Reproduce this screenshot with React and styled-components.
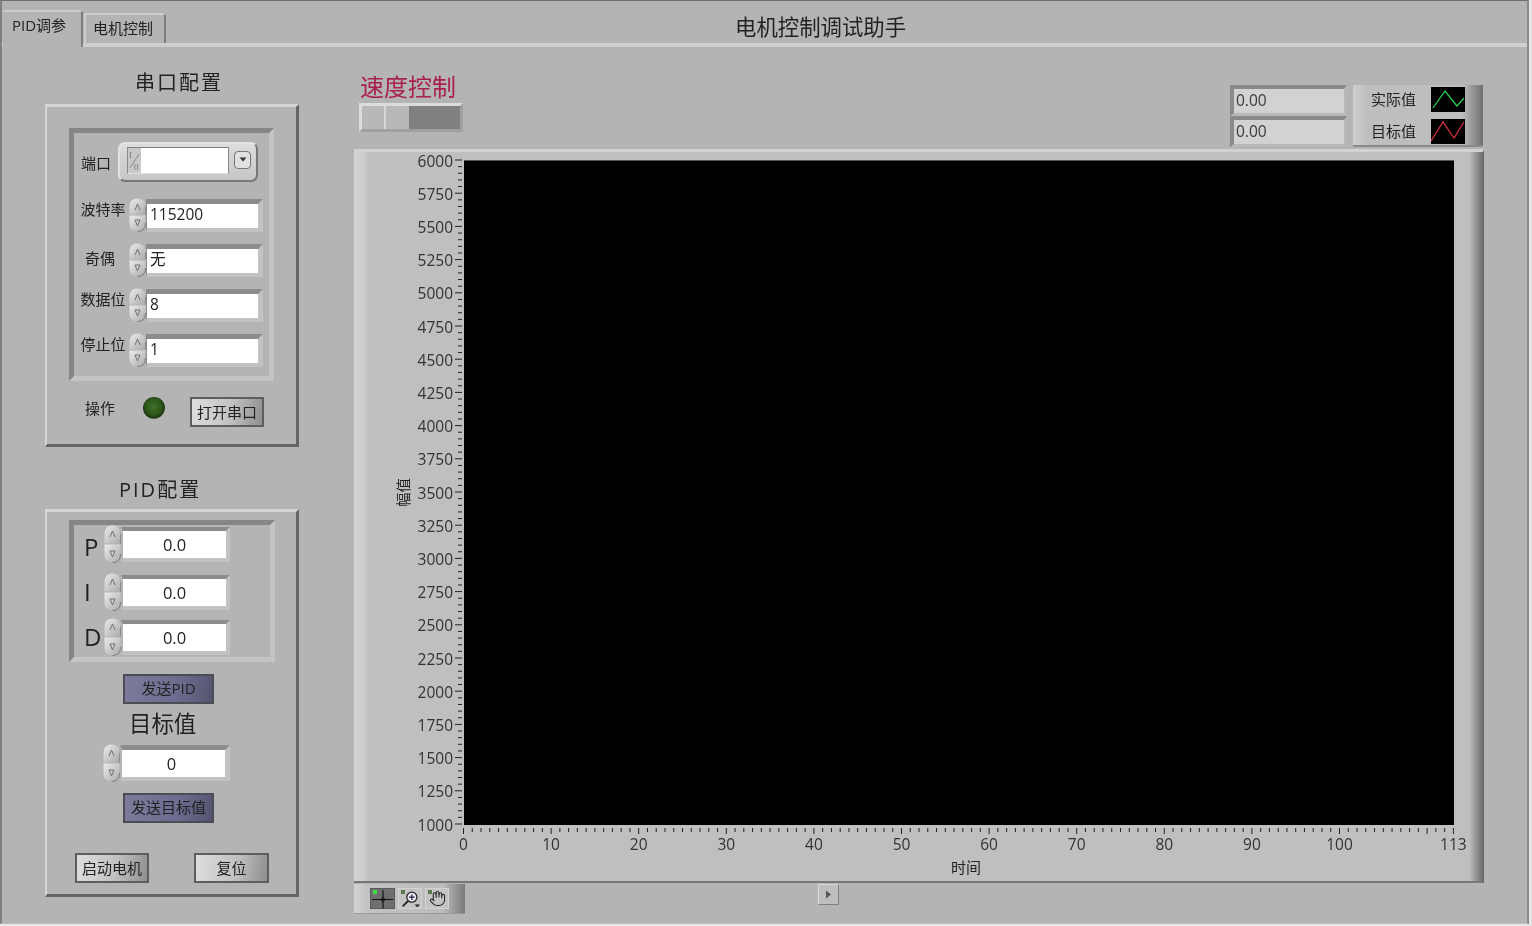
import styled, { createGlobalStyle } from "styled-components";
import { Hand } from "lucide-react";

const Y_LABELS = [6000, 5750, 5500, 5250, 5000, 4750, 4500, 4250, 4000, 3750, 3500, 3250, 3000, 2750, 2500, 2250, 2000, 1750, 1500, 1250, 1000];
const Y_STEP = 33.2;
const X_UNIT = 8.76;

function Spinner({ height = 34 }) {
  const mid = height / 2;
  return (
    <SpinnerSvg width="17" height={height} viewBox={`0 0 17 ${height}`}>
      <defs>
        <linearGradient id="spinFill" x1="0" y1="0" x2="1" y2="1">
          <stop offset="0" stopColor="#ececec" />
          <stop offset="1" stopColor="#aaaaaa" />
        </linearGradient>
      </defs>
      <path d={`M0.5 ${mid - 0.5} V9 Q0.5 0.5 8.5 0.5 Q16.5 0.5 16.5 9 V${mid - 0.5} Z`} fill="url(#spinFill)" />
      <path d={`M0.5 ${mid + 0.5} H16.5 V${height - 9} Q16.5 ${height - 0.5} 8.5 ${height - 0.5} Q0.5 ${height - 0.5} 0.5 ${height - 9} Z`} fill="url(#spinFill)" />
      <path d={`M16.5 ${height - 9} Q16.5 ${height - 0.5} 8.5 ${height - 0.5}`} fill="none" stroke="#7c7c7c" strokeWidth="1" />
      <path d={`M16.5 9 V${mid - 0.5}`} fill="none" stroke="#8c8c8c" strokeWidth="1" />
      <path d="M6 12 L8.5 6 L11 12" fill="none" stroke="#707070" strokeWidth="1" />
      <path d={`M6 ${height - 12} H11 L8.5 ${height - 6} Z`} fill="none" stroke="#707070" strokeWidth="1" />
    </SpinnerSvg>
  );
}

function SerialRow({ label, value, lift, nudge = 0 }) {
  return (
    <Row>
      <SerialLabel $lift={lift} $nudge={nudge}>{label}</SerialLabel>
      <Spinner />
      <SerialField>{value}</SerialField>
    </Row>
  );
}

function PidRow({ letter, drop, gap, value }) {
  return (
    <PidLine $gap={gap}>
      <PidLetter $drop={drop}>{letter}</PidLetter>
      <Spinner height={38} />
      <PidField>{value}</PidField>
    </PidLine>
  );
}

function YAxis() {
  const minors = [];
  for (let i = 0; i < 20; i++) {
    for (let m = 1; m < 5; m++) {
      minors.push(12 + i * Y_STEP + (m * Y_STEP) / 5);
    }
  }
  return (
    <AxisSvg width="54" height="690" viewBox="0 0 54 690">
      {Y_LABELS.map((v, i) => (
        <g key={v}>
          <AxisText x="43" y={12 + i * Y_STEP + 6.6} textAnchor="end">
            {v}
          </AxisText>
          <line x1="45" x2="52" y1={12 + i * Y_STEP} y2={12 + i * Y_STEP} stroke="#222" />
        </g>
      ))}
      {minors.map((y) => (
        <line key={y} x1="48" x2="52" y1={y} y2={y} stroke="#222" />
      ))}
    </AxisSvg>
  );
}

function XAxis() {
  const units = [];
  for (let u = 0; u <= 113; u++) units.push(u);
  const labels = [0, 10, 20, 30, 40, 50, 60, 70, 80, 90, 100, 113];
  return (
    <AxisSvg width="1010" height="30" viewBox="0 0 1010 30">
      {units.map((u) => {
        const major = u % 10 === 0 || u === 113;
        return (
          <line
            key={u}
            x1={0.5 + u * X_UNIT}
            x2={0.5 + u * X_UNIT}
            y1="3"
            y2={major ? 9 : 7}
            stroke="#222"
          />
        );
      })}
      {labels.map((v) => (
        <AxisText key={v} x={0.5 + v * X_UNIT} y="24.5" textAnchor="middle">
          {v}
        </AxisText>
      ))}
    </AxisSvg>
  );
}

export default function App() {
  return (
    <>
      <GlobalStyle />
      <Frame>
        <TabBar>
          <ActiveTab>PID调参</ActiveTab>
          <Tab>电机控制</Tab>
          <Title>电机控制调试助手</Title>
        </TabBar>
        <Main>
          <LeftColumn>
            <Heading $top={21} $height={57} $left={90}>
              串口配置
            </Heading>
            <Panel $height={343}>
              <SerialRecess>
                <PortRow>
                  <PortLabel>端口</PortLabel>
                  <PortBox>
                    <PortInput>
                      <IoTag>
                        <svg width="13" height="25" viewBox="0 0 13 25">
                          <IoText x="1" y="10">I</IoText>
                          <path d="M2 20 L11 6" stroke="#777" strokeWidth="0.8" />
                          <IoText x="6" y="22">0</IoText>
                        </svg>
                      </IoTag>
                    </PortInput>
                    <PortButton>
                      <svg width="8" height="5" viewBox="0 0 8 5">
                        <path d="M0.5 0.5 H7.5 L4 4.5 Z" fill="#333" />
                      </svg>
                    </PortButton>
                  </PortBox>
                </PortRow>
                <SerialRows>
                  <SerialRow label="波特率" value="115200" lift={7} />
                  <SerialRow label="奇偶" value="无" lift={3} nudge={6} />
                  <SerialRow label="数据位" value="8" lift={7} />
                  <SerialRow label="停止位" value="1" lift={7} />
                </SerialRows>
              </SerialRecess>
              <OperationRow>
                <OperationLabel>操作</OperationLabel>
                <Led />
                <Button $width={74}>打开串口</Button>
              </OperationRow>
            </Panel>
            <Heading $top={28} $height={62} $left={74}>
              PID配置
            </Heading>
            <Panel $height={388}>
              <PidRecess>
                <PidRow letter="P" drop={6} gap={0} value="0.0" />
                <PidRow letter="I" drop={0} gap={10} value="0.0" />
                <PidRow letter="D" drop={0} gap={7} value="0.0" />
              </PidRecess>
              <PurpleButton $top={12}>发送PID</PurpleButton>
              <TargetTitle>目标值</TargetTitle>
              <TargetRow>
                <Spinner height={38} />
                <TargetField>0</TargetField>
              </TargetRow>
              <PurpleButton $top={11}>发送目标值</PurpleButton>
              <BottomButtons>
                <Button $width={74}>启动电机</Button>
                <Button $width={75}>复位</Button>
              </BottomButtons>
            </Panel>
          </LeftColumn>
          <RightColumn>
            <TopRow>
              <ModeBlock>
                <ModeTitle>速度控制</ModeTitle>
                <Slide>
                  <SlideCell $width={22} />
                  <SlideCell $width={23} />
                  <SlideThumb />
                </Slide>
              </ModeBlock>
              <ReadoutGroup>
                <Readouts>
                  <Readout>0.00</Readout>
                  <Readout>0.00</Readout>
                </Readouts>
                <Legend>
                  <LegendRow>
                    <LegendLabel>实际值</LegendLabel>
                    <Swatch width="34" height="25" viewBox="0 0 34 25">
                      <path d="M2 21 L14 4 L26 19 L33 11" fill="none" stroke="#2ad052" strokeWidth="1.3" />
                    </Swatch>
                  </LegendRow>
                  <LegendRow>
                    <LegendLabel>目标值</LegendLabel>
                    <Swatch width="34" height="25" viewBox="0 0 34 25">
                      <path d="M0 22 L12 3 L23 19 L33 3" fill="none" stroke="#d03040" strokeWidth="1.3" />
                    </Swatch>
                  </LegendRow>
                </Legend>
              </ReadoutGroup>
            </TopRow>
            <Chart>
              <PlotRow>
                <YTitle>幅值</YTitle>
                <YAxis />
                <Plot />
              </PlotRow>
              <XArea>
                <XAxis />
                <XTitle>时间</XTitle>
              </XArea>
            </Chart>
            <BottomRow>
              <Toolbar>
                <ToolButton $pressed>
                  <ToolDot $on />
                  <svg width="24" height="20" viewBox="0 0 24 20">
                    <path d="M1 10.5 H23 M12.5 1 V20" stroke="#111" strokeWidth="1.2" />
                    <circle cx="12.5" cy="10.5" r="1.8" fill="none" stroke="#111" />
                  </svg>
                </ToolButton>
                <ToolButton>
                  <ToolDot />
                  <svg width="23" height="20" viewBox="0 0 24 20">
                    <circle cx="14" cy="8" r="5.5" fill="#e8e8f0" stroke="#222" strokeWidth="1.4" />
                    <path d="M11 8 H17 M14 5 V11" stroke="#224" strokeWidth="1.4" />
                    <path d="M10 12 L4 18" stroke="#222" strokeWidth="2" />
                    <path d="M17 16 H23 L20 19 Z" fill="#222" />
                  </svg>
                </ToolButton>
                <ToolButton>
                  <ToolDot />
                  <Hand size={17} strokeWidth={1.5} color="#222" />
                </ToolButton>
              </Toolbar>
              <ScrollButton>
                <svg width="7" height="9" viewBox="0 0 7 9">
                  <path d="M1 0.5 L6 4.5 L1 8.5 Z" fill="#555" />
                </svg>
              </ScrollButton>
            </BottomRow>
          </RightColumn>
        </Main>
      </Frame>
    </>
  );
}

const GlobalStyle = createGlobalStyle`
  html, body {
    margin: 0;
    padding: 0;
    background: #e6e6e6;
  }
  body {
    font-family: "Open Sans", "Noto Sans CJK SC", sans-serif;
    color: #222;
    overflow: hidden;
  }
  * {
    box-sizing: border-box;
  }
`;

const Frame = styled.div`
  width: 1529px;
  height: 924px;
  background: #b4b4b4;
  border-top: 1px solid #6e6e6e;
  border-left: 2px solid #808080;
  border-right: 2px solid #8a8a8a;
  border-bottom: 1px solid #bcbcbc;
  filter: blur(0.4px);
`;

const TabBar = styled.div`
  display: flex;
  align-items: flex-end;
  height: 46px;
  border-bottom: 4px solid #cfcfcf;
`;

const ActiveTab = styled.div`
  width: 80px;
  height: 37px;
  margin-left: 1px;
  margin-bottom: -4px;
  padding: 3px 0 0 9px;
  font-size: 15px;
  line-height: 20px;
  background: #b4b4b4;
  border-top: 2px solid #cdcdcd;
  border-right: 2px solid #7e7e7e;
  border-top-right-radius: 4px;
`;

const Tab = styled.div`
  width: 82px;
  height: 30px;
  margin-left: 1px;
  padding-left: 7px;
  font-size: 15px;
  line-height: 27px;
  background: #b4b4b4;
  border-top: 2px solid #cdcdcd;
  border-left: 2px solid #cdcdcd;
  border-right: 2px solid #7e7e7e;
  border-top-right-radius: 4px;
`;

const Title = styled.div`
  align-self: flex-start;
  margin-top: 11px;
  margin-left: 569px;
  font-size: 21.4px;
  line-height: 30px;
`;

const Main = styled.div`
  display: flex;
  padding-left: 43px;
  gap: 55px;
`;

const LeftColumn = styled.div`
  display: flex;
  flex-direction: column;
  width: 254px;
`;

const Heading = styled.div`
  height: ${(p) => p.$height}px;
  padding-top: ${(p) => p.$top}px;
  padding-left: ${(p) => p.$left}px;
  font-size: 20px;
  letter-spacing: 2px;
  line-height: 30px;
`;

const Panel = styled.div`
  height: ${(p) => p.$height}px;
  border-style: solid;
  border-width: 3px 3px 3px 2px;
  border-color: #d6d6d6 #666 #666 #d6d6d6;
`;

const SerialRecess = styled.div`
  width: 205px;
  height: 253px;
  margin: 21px 0 0 22px;
  padding-top: 9px;
  border: 5px solid;
  border-color: #868686 #c4c4c4 #c4c4c4 #868686;
`;

const PortRow = styled.div`
  display: flex;
  align-items: center;
  height: 40px;
`;

const PortLabel = styled.div`
  width: 30px;
  margin: 0 7px;
  font-size: 15px;
`;

const PortBox = styled.div`
  display: flex;
  align-items: center;
  width: 140px;
  height: 40px;
  padding-left: 7px;
  background: linear-gradient(#dcdcdc, #c6c6c6);
  border: 2px solid;
  border-color: #e2e2e2 #777 #777 #e2e2e2;
  border-radius: 7px;
`;

const PortInput = styled.div`
  width: 102px;
  height: 27px;
  margin-bottom: 3px;
  background: #fff;
  border: 1px solid;
  border-color: #7e7e7e #8a8a8a #e0e0e0 #8a8a8a;
`;

const IoTag = styled.div`
  width: 13px;
  height: 25px;
  background: #c8c8c8;
`;

const IoText = styled.text`
  font-family: "Liberation Serif", serif;
  font-size: 9px;
  fill: #777;
`;

const PortButton = styled.div`
  display: flex;
  align-items: center;
  justify-content: center;
  width: 17px;
  height: 18px;
  margin-left: 5px;
  margin-bottom: 5px;
  background: #e0e0e0;
  border: 1px solid #777;
  border-radius: 4px;
`;

const SerialRows = styled.div`
  display: flex;
  flex-direction: column;
  gap: 11px;
  margin-top: 16px;
`;

const Row = styled.div`
  display: flex;
  align-items: center;
  height: 34px;
`;

const SerialLabel = styled.div`
  width: 46px;
  margin-left: 6px;
  margin-right: 3px;
  padding-bottom: ${(p) => p.$lift * 2}px;
  padding-right: ${(p) => p.$nudge}px;
  font-size: 15px;
  text-align: center;
  white-space: nowrap;
`;

const SpinnerSvg = styled.svg`
  display: block;
  flex: none;
`;

const SerialField = styled.div`
  width: 117px;
  height: 33px;
  padding-left: 3px;
  background: #fff;
  font-size: 15.5px;
  line-height: 21px;
  border-style: solid;
  border-width: 5px 5px 4px 1px;
  border-color: #8c8c8c #c2c2c2 #c2c2c2 #8c8c8c;
`;

const OperationRow = styled.div`
  display: flex;
  align-items: center;
  height: 30px;
  margin-top: 16px;
  padding-left: 38px;
`;

const OperationLabel = styled.div`
  width: 31px;
  padding-bottom: 9px;
  font-size: 15px;
  white-space: nowrap;
`;

const Led = styled.div`
  width: 22px;
  height: 22px;
  margin: 0 25px 8px 27px;
  border-radius: 50%;
  background: radial-gradient(circle at 48% 45%, #3f7028 0, #2c5518 50%, #1c3510 66%, #8a8a8a 76%, #e0e0e0 100%);
`;

const Button = styled.div`
  display: flex;
  align-items: center;
  justify-content: center;
  flex: none;
  width: ${(p) => p.$width}px;
  height: 30px;
  padding-bottom: 2px;
  font-size: 15px;
  white-space: nowrap;
  background: linear-gradient(100deg, #dedede 0, #c2c2c2 55%, #8e8e8e 100%);
  border: 2px solid #5e5e5e;
`;

const PurpleButton = styled.div`
  display: flex;
  align-items: center;
  justify-content: center;
  width: 91px;
  height: 30px;
  margin-top: ${(p) => p.$top}px;
  margin-left: 76px;
  padding-bottom: 3px;
  font-size: 15px;
  white-space: nowrap;
  background: linear-gradient(100deg, #7c7b9c 0, #6d6c90 60%, #55546f 100%);
  border: 2px solid #4c4c56;
`;

const PidRecess = styled.div`
  width: 206px;
  height: 142px;
  margin: 8px 0 0 22px;
  border: 5px solid;
  border-color: #868686 #c4c4c4 #c4c4c4 #868686;
`;

const PidLine = styled.div`
  display: flex;
  align-items: center;
  height: 38px;
  margin-top: ${(p) => p.$gap}px;
`;

const PidLetter = styled.div`
  width: 20px;
  margin-left: 10px;
  padding-top: ${(p) => p.$drop}px;
  font-size: 24px;
  line-height: 30px;
`;

const PidField = styled.div`
  width: 109px;
  height: 35px;
  background: #fff;
  font-size: 16.5px;
  line-height: 28px;
  text-align: center;
  border-style: solid;
  border-width: 4px 4px 4px 2px;
  border-color: #8c8c8c #c2c2c2 #c2c2c2 #b4b4b4;
`;

const TargetTitle = styled.div`
  height: 40px;
  padding-left: 82px;
  padding-bottom: 2px;
  font-size: 22.4px;
  line-height: 40px;
`;

const TargetRow = styled.div`
  display: flex;
  align-items: center;
  height: 38px;
  margin-left: 56px;
`;

const TargetField = styled(PidField)`
  width: 110px;
  height: 36px;
  padding-right: 4px;
  border-width: 5px 5px 4px 2px;
`;

const BottomButtons = styled.div`
  display: flex;
  gap: 45px;
  margin-top: 30px;
  margin-left: 28px;
`;

const RightColumn = styled.div`
  display: flex;
  flex-direction: column;
  width: 1130px;
`;

const TopRow = styled.div`
  display: flex;
  justify-content: space-between;
  height: 102px;
  padding-right: 1px;
`;

const ModeBlock = styled.div`
  padding-top: 25px;
  padding-left: 5px;
`;

const ModeTitle = styled.div`
  margin-left: 1px;
  font-size: 24px;
  line-height: 30px;
  color: #a8204c;
`;

const Slide = styled.div`
  display: flex;
  width: 104px;
  height: 29px;
  margin-top: 1px;
  background: #d8d8d8;
  border: 3px solid;
  border-color: #dcdcdc #a0a0a0 #a0a0a0 #dcdcdc;
`;

const SlideCell = styled.div`
  width: ${(p) => p.$width}px;
  margin-right: 2px;
  background: #b8b8b8;
`;

const SlideThumb = styled.div`
  flex: 1;
  margin-left: -2px;
  background: #808080;
`;

const ReadoutGroup = styled.div`
  display: flex;
  gap: 6px;
  margin-top: 38px;
  height: 62px;
`;

const Readouts = styled.div`
  display: flex;
  flex-direction: column;
`;

const Readout = styled.div`
  width: 117px;
  height: 31px;
  padding-left: 2px;
  background: #d2d2d2;
  font-size: 15.5px;
  line-height: 22px;
  color: #3a3a3a;
  border-style: solid;
  border-width: 4px 3px 3px 4px;
  border-color: #8a8a8a #b8b8b8 #b8b8b8 #8a8a8a;
`;

const Legend = styled.div`
  display: flex;
  flex-direction: column;
  justify-content: center;
  gap: 7px;
  width: 130px;
  padding-left: 18px;
  background: linear-gradient(90deg, #cecece 0, #bebebe 14px, #bebebe 84%, #6f6f6f 100%);
  border-bottom: 2px solid #8a8a8a;
`;

const LegendRow = styled.div`
  display: flex;
  align-items: center;
  gap: 14px;
`;

const LegendLabel = styled.div`
  width: 46px;
  padding-bottom: 2px;
  font-size: 15px;
  white-space: nowrap;
`;

const Swatch = styled.svg`
  display: block;
  background: #000;
`;

const Chart = styled.div`
  width: 1130px;
  height: 734px;
  padding-top: 8px;
  background: linear-gradient(90deg, #d2d2d2 0, #cdcdcd 10px, #bfbfbf 14px, #bfbfbf calc(100% - 14px), #6c6c6c 100%);
  border-top: 3px solid #d2d2d2;
  border-right: 1px solid #666;
  border-bottom: 2px solid #777;
`;

const PlotRow = styled.div`
  display: flex;
  align-items: flex-start;
  height: 665px;
  padding-left: 40px;
`;

const YTitle = styled.div`
  display: flex;
  align-items: center;
  justify-content: center;
  flex: none;
  width: 16px;
  height: 665px;
  writing-mode: vertical-rl;
  text-orientation: sideways;
  transform: rotate(180deg);
  font-size: 14.5px;
`;

const AxisSvg = styled.svg`
  display: block;
  flex: none;
  overflow: visible;
  margin-top: -12px;
`;

const AxisText = styled.text`
  font-family: "Open Sans", sans-serif;
  font-size: 15.5px;
  fill: #333;
`;

const Plot = styled.div`
  flex: none;
  width: 990px;
  height: 665px;
  background: #000;
  border-top: 1px solid #555;
`;

const XArea = styled.div`
  padding-left: 109px;
  padding-top: 12px;
`;

const XTitle = styled.div`
  width: 990px;
  margin-top: 2px;
  font-size: 15px;
  line-height: 20px;
  padding-left: 488px;
`;

const BottomRow = styled.div`
  display: flex;
  align-items: flex-start;
  padding-top: 1px;
`;

const Toolbar = styled.div`
  display: flex;
  align-items: center;
  gap: 3px;
  width: 111px;
  height: 30px;
  padding-left: 16px;
  background: linear-gradient(90deg, #d4d4d4 0, #c2c2c2 14px, #bcbcbc 80%, #7a7a7a 100%);
  border-bottom: 1px solid #9a9a9a;
`;

const ToolButton = styled.div`
  position: relative;
  display: flex;
  align-items: center;
  justify-content: center;
  width: ${(p) => (p.$pressed ? 25 : 24)}px;
  height: 21px;
  background: ${(p) => (p.$pressed ? "#6f6f6f" : "#c4c4c4")};
  border: 1px solid ${(p) => (p.$pressed ? "#5a5a5a" : "#d4d4d4")};
`;

const ToolDot = styled.span`
  position: absolute;
  top: 1px;
  left: 2px;
  width: 4px;
  height: 4px;
  background: ${(p) => (p.$on ? "#40e040" : "#5c7a50")};
`;

const ScrollButton = styled.div`
  display: flex;
  align-items: center;
  justify-content: center;
  width: 21px;
  height: 21px;
  margin-left: 353px;
  background: #bebebe;
  border: 1px solid;
  border-color: #dadada #808080 #808080 #dadada;
`;
